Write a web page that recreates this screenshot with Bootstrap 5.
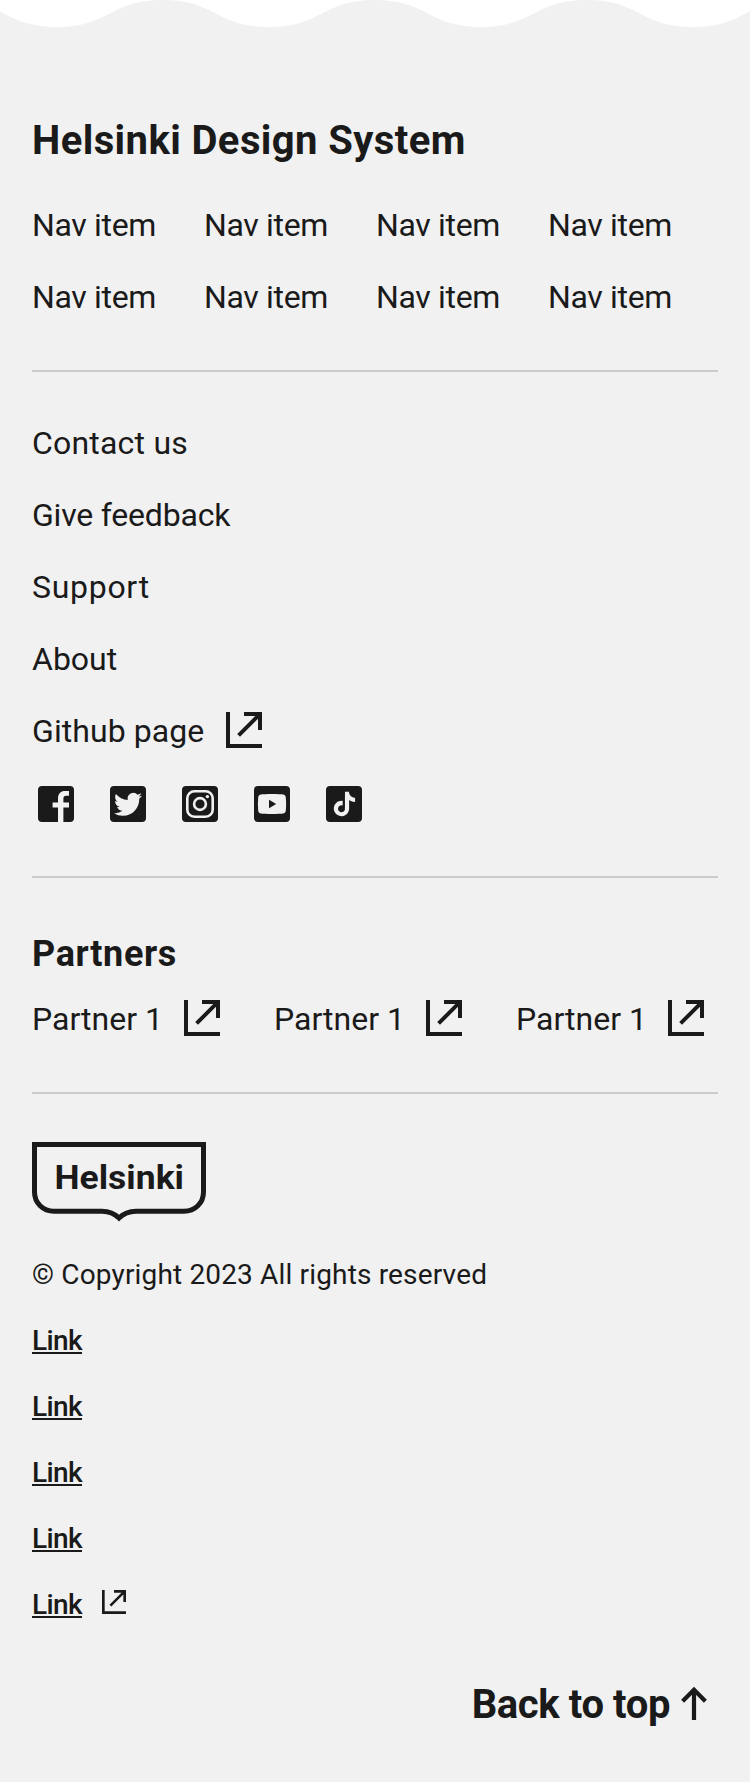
<!DOCTYPE html>
<html lang="en">
<head>
<meta charset="utf-8">
<meta name="viewport" content="width=device-width, initial-scale=1">
<title>Helsinki Design System</title>
<link rel="stylesheet" href="https://cdn.jsdelivr.net/npm/bootstrap@5.3.0/dist/css/bootstrap.min.css">
<style>
  body { font-family: Roboto, "Liberation Sans", sans-serif; color: #1a1a1a; background: #fff; }
  a { color: #1a1a1a; }
  .site-footer { background: #f1f1f1; height: 1782px; }
  .koros { height: 30px; }
  .footer-body { padding: 81px 32px 0; }
  .site-title { font-size: 40px; line-height: 60px; letter-spacing: .4px; }
  .nav-grid { grid-template-columns: repeat(4, 124px); gap: 24px 48px; margin-top: 30px; }
  .item { font-size: 32px; line-height: 48px; text-decoration: none; white-space: nowrap; }
  .nav-grid .item { letter-spacing: -.34px; }
  .divider { height: 2px; background: #ccc; }
  .nav-divider { margin-top: 49px; }
  .stack { gap: 24px; margin-top: 47px; }
  .wide { letter-spacing: .2px; }
  .wider { letter-spacing: .7px; }
  .tight { letter-spacing: -.2px; }
  .ext, .ext-sm { fill: #1a1a1a; }
  .ext { width: 48px; height: 48px; margin: -1px 0 1px; }
  .ext-sm { width: 32px; height: 32px; margin: 2px 0 0 16px; }
  .github .item { width: 188px; letter-spacing: .08px; }
  .social { gap: 24px; margin-top: 25px; }
  .social svg, .up { width: 48px; height: 48px; }
  .partners-title { font-size: 36px; line-height: 54px; letter-spacing: .65px; margin-top: 49px; }
  .partners { gap: 42px; margin-top: 14px; }
  .partner { width: 200px; }
  .partner .item { width: 146px; flex: none; }
  .partner .ext, .github .ext { flex: none; }
  .partners-divider { margin-top: 49px; }
  .logo { width: 174px; height: 80px; margin-top: 48px; }
  .base { font-size: 28px; line-height: 42px; }
  .copyright { margin-top: 32px; letter-spacing: .16px; }
  .base-links { gap: 24px; margin-top: 24px; }
  .base-link { font-weight: 500; width: 50px; height: 34px; line-height: 42px; margin-bottom: 8px; letter-spacing: -.64px; text-decoration: none; border-bottom: 2px solid; }
  .back { font-size: 40px; line-height: 60px; letter-spacing: -.4px; text-decoration: none; margin-top: 49px; }
  .up { margin-top: 5px; }
</style>
</head>
<body>
<svg class="d-none">
  <symbol id="external" viewBox="0 0 24 24"><path d="M3 3h2v16h16v2H3zM12 3h9v9h-2V6.400l-9 9L8.600 14l9-9H12z"/></symbol>
</svg>

<footer class="site-footer overflow-hidden">
  <svg class="koros d-block w-100">
    <defs>
      <pattern id="wave" width="106" height="15" patternUnits="userSpaceOnUse" patternTransform="translate(-49 0) scale(2)">
        <path fill="#fff" d="M0 0c26.500 0 26.500 13.500 53 13.500S79.500 0 106 0z"/>
      </pattern>
    </defs>
    <rect width="100%" height="29" fill="url(#wave)"/>
  </svg>

  <div class="footer-body">
    <h2 class="site-title fw-bold m-0">Helsinki Design System</h2>
    <nav class="nav-grid d-grid">
      <a class="item" href="#">Nav item</a><a class="item" href="#">Nav item</a>
      <a class="item" href="#">Nav item</a><a class="item" href="#">Nav item</a>
      <a class="item" href="#">Nav item</a><a class="item" href="#">Nav item</a>
      <a class="item" href="#">Nav item</a><a class="item" href="#">Nav item</a>
    </nav>
    <div class="divider nav-divider"></div>

    <div class="stack d-flex flex-column align-items-start">
      <a class="item wide" href="#">Contact us</a>
      <a class="item tight" href="#">Give feedback</a>
      <a class="item wider" href="#">Support</a>
      <a class="item" href="#">About</a>
      <div class="github d-flex"><a class="item" href="#">Github page</a><svg class="ext"><use href="#external"/></svg></div>
    </div>
    <div class="social d-flex">
      <svg viewBox="0 0 24 24"><rect x="3" y="3" width="18" height="18" rx="2" fill="#1a1a1a"/><path fill="#f1f1f1" d="M13 21v-7.300h-2.700v-2.500H13V9.200c0-2.400 1.400-3.700 3.500-3.700h2v2.400h-1.300c-1.200 0-1.500.6-1.500 1.400v1.900h2.800v2.500h-2.800V21z"/></svg>
      <svg viewBox="0 0 24 24"><rect x="3" y="3" width="18" height="18" rx="2" fill="#1a1a1a"/><path fill="#f1f1f1" transform="translate(5 5.150) scale(.585)" d="M23.953 4.570a10 10 0 01-2.825.775 4.958 4.958 0 002.163-2.723c-.951.555-2.005.959-3.127 1.184a4.920 4.920 0 00-8.384 4.482C7.690 8.095 4.067 6.130 1.640 3.162a4.822 4.822 0 00-.666 2.475c0 1.710.870 3.213 2.188 4.096a4.904 4.904 0 01-2.228-.616v.060a4.923 4.923 0 003.946 4.827 4.996 4.996 0 01-2.212.085 4.936 4.936 0 004.604 3.417 9.867 9.867 0 01-6.102 2.105c-.390 0-.779-.023-1.170-.067a13.995 13.995 0 007.557 2.209c9.053 0 13.998-7.496 13.998-13.985 0-.210 0-.420-.015-.630A9.935 9.935 0 0024 4.590z"/></svg>
      <svg viewBox="0 0 24 24"><rect x="3" y="3" width="18" height="18" rx="2" fill="#1a1a1a"/><g fill="none" stroke="#f1f1f1" stroke-width="1.300"><rect x="5.650" y="5.650" width="12.700" height="12.700" rx="3.500"/><circle cx="12" cy="12" r="2.950"/></g><circle cx="15.700" cy="8.300" r=".85" fill="#f1f1f1"/></svg>
      <svg viewBox="0 0 24 24"><rect x="3" y="3" width="18" height="18" rx="2" fill="#1a1a1a"/><path fill="#f1f1f1" d="M12 7c2.500 0 4.500.1 5.500.25.9.15 1.300.6 1.400 1.500.2 2.100.2 4.400 0 6.500-.1.900-.5 1.350-1.400 1.500-2 .3-9 .3-11 0-.9-.15-1.300-.6-1.400-1.500-.2-2.100-.2-4.400 0-6.500.1-.9.500-1.350 1.400-1.500C7.500 7.100 9.500 7 12 7z"/><path fill="#1a1a1a" d="M10.500 9.850v4.250L14.100 12z"/></svg>
      <svg viewBox="0 0 24 24"><rect x="3" y="3" width="18" height="18" rx="2" fill="#1a1a1a"/><path fill="#f1f1f1" transform="translate(6.100 5.850) scale(.51)" d="M12.525.020c1.310-.020 2.610-.010 3.910-.020.080 1.530.630 3.090 1.750 4.170 1.120 1.110 2.700 1.620 4.240 1.790v4.030c-1.440-.050-2.890-.350-4.200-.970-.570-.260-1.100-.590-1.620-.930-.010 2.920.010 5.840-.020 8.750-.080 1.400-.540 2.790-1.350 3.940-1.310 1.920-3.580 3.170-5.910 3.210-1.430.080-2.860-.310-4.080-1.030-2.020-1.190-3.440-3.370-3.650-5.710-.020-.500-.030-1-.010-1.490.180-1.900 1.120-3.720 2.580-4.960 1.660-1.440 3.980-2.130 6.150-1.720.020 1.480-.040 2.960-.040 4.440-.990-.320-2.150-.230-3.020.370-.630.410-1.110 1.040-1.360 1.750-.210.510-.150 1.070-.140 1.610.240 1.640 1.820 3.020 3.500 2.870 1.120-.010 2.190-.660 2.770-1.610.190-.330.400-.670.410-1.060.100-1.790.060-3.570.070-5.360.010-4.030-.010-8.050.020-12.070z"/></svg>
    </div>
    <div class="divider mt-5"></div>

    <h3 class="partners-title fw-bold mb-0">Partners</h3>
    <div class="partners d-flex">
      <div class="partner d-flex"><a class="item" href="#">Partner 1</a><svg class="ext"><use href="#external"/></svg></div>
      <div class="partner d-flex"><a class="item" href="#">Partner 1</a><svg class="ext"><use href="#external"/></svg></div>
      <div class="partner d-flex"><a class="item" href="#">Partner 1</a><svg class="ext"><use href="#external"/></svg></div>
    </div>
    <div class="divider partners-divider"></div>

    <svg class="logo d-block" viewBox="0 0 174 80">
      <path fill="none" stroke="#1a1a1a" stroke-width="5" d="M2.500 2.500h169v47.500c0 11-8.500 19.200-19.500 19.200h-48c-7 0-12 1.800-17 6.800-5-5-10-6.800-17-6.800H22C11 69.200 2.500 61 2.500 50z"/>
      <text x="22.500" y="47.300" font-size="33" font-weight="700" fill="#1a1a1a" textLength="129.500" lengthAdjust="spacingAndGlyphs">Helsinki</text>
    </svg>
    <div class="base copyright">© Copyright 2023 All rights reserved</div>
    <div class="base base-links d-flex flex-column align-items-start">
      <a class="base-link" href="#">Link</a>
      <a class="base-link" href="#">Link</a>
      <a class="base-link" href="#">Link</a>
      <a class="base-link" href="#">Link</a>
      <div class="d-flex"><a class="base-link" href="#">Link</a><svg class="ext-sm"><use href="#external"/></svg></div>
    </div>
    <a class="back fw-bold d-flex justify-content-end" href="#"><span>Back to top</span><svg class="up" viewBox="0 0 24 24"><path fill="none" stroke="#1a1a1a" stroke-width="2.100" d="M12 20V5M6.300 10.600 12 4.900l5.700 5.700"/></svg></a>
  </div>
</footer>
<script src="https://cdn.jsdelivr.net/npm/bootstrap@5.3.0/dist/js/bootstrap.bundle.min.js"></script>
</body>
</html>
